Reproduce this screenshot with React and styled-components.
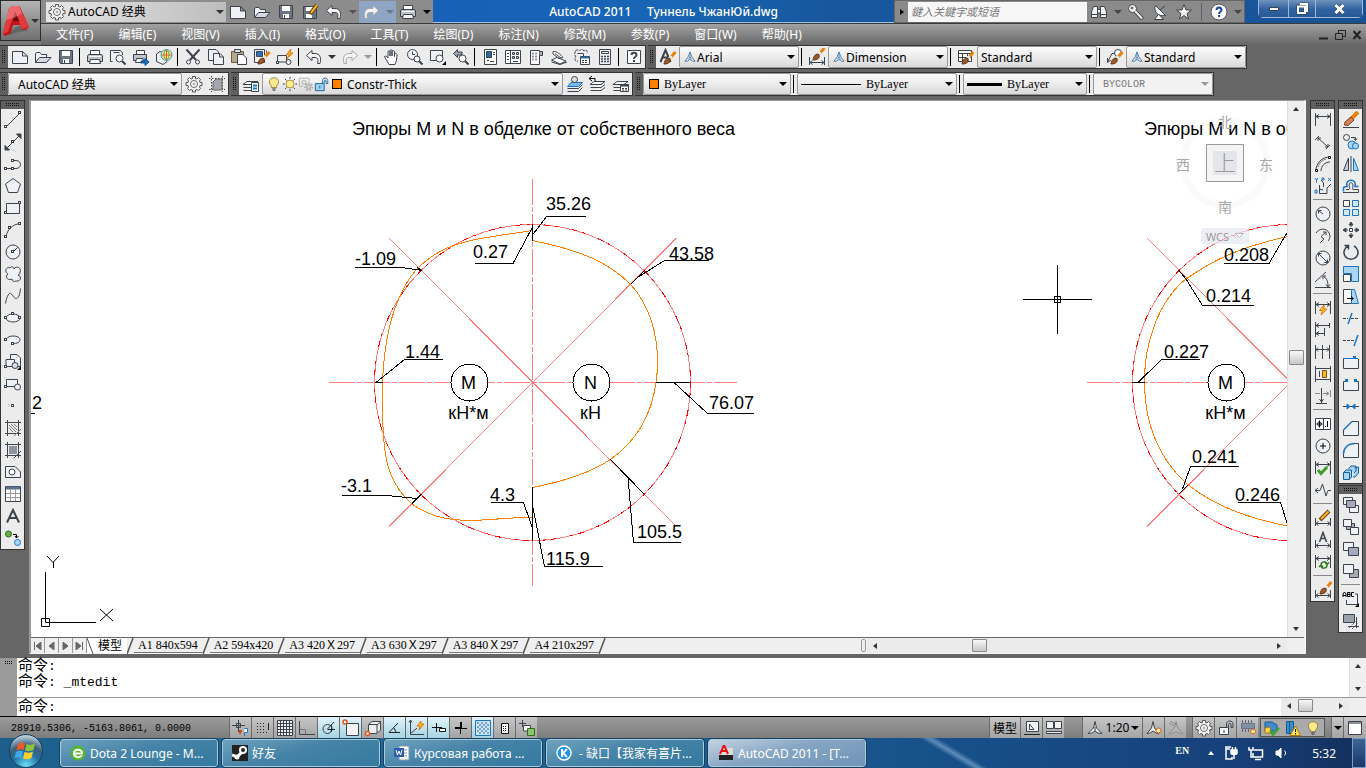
import React from "react";
import styled, { createGlobalStyle, css } from "styled-components";

const INK = "#3b434d";
const PALE = "#eef1f6";
const BLUE = "#1b74c4";
const SKY = "#a9d6f2";

const Node = ({ x, y }) => <rect x={x - 1.5} y={y - 1.5} width="2" height="2" fill="#fff" />;

const Brush = () => (
  <>
    <path d="M16.500 4L11.500 9.500" stroke="#e8820c" strokeWidth="3" />
    <path d="M12.500 8L10 11" stroke="#e8e8e8" strokeWidth="3" />
    <path d="M11 10.500C8 9.500 6 11 5 16C9 16 12 14.500 11 10.500Z" fill="#9c5a28" stroke="#5f3414" />
  </>
);

const DimBar = ({ y = 0 }) => (
  <path d={`M1.500 ${y + 2}V${y + 15} M16.500 ${y + 2}V${y + 15} M2 ${y + 5.5}H16 M5 ${y + 3.5}L2 ${y + 5.5}L5 ${y + 7.5} M13 ${y + 3.5}L16 ${y + 5.5}L13 ${y + 7.5}`} />
);

const LowBar = () => <path d="M1.500 9V17 M16.500 9V17 M2 14.500H16 M4.500 12.500L2 14.500L4.500 16.500 M13.500 12.500L16 14.500L13.500 16.500" />;

const Gear = () => (
  <>
    <path d="M7.500 1.500H10.500V3.500L12 4L13.500 2.500L15.500 4.500L14.500 6L15 7.500H17V10.500H15L14.500 12L15.500 13.500L13.500 15.500L12 14.500L10.500 15V17H7.500V15L6 14.500L4.500 15.500L2.500 13.500L3.500 12L3 10.500H1V7.500H3L3.500 6L2.500 4.500L4.500 2.500L6 4L7.500 3.500Z" fill="#f2f2f2" stroke="#555" />
    <circle cx="9" cy="9" r="3.500" fill="#fff" stroke="#666" />
    <circle cx="9" cy="9" r="1" stroke="#999" />
  </>
);

const Sheets = () => (
  <path d="M5 6.500H16L12 9.500H1Z M1.500 12.500H12L16 9.500 M1.500 15.500H12L16 12.500 M1.500 9.500V10" fill="#fff" />
);

const icons = {
  new: <path d="M1.500 3.500H11.500L16.500 8V15.500H1.500Z M11.500 3.500V8H16.500" fill={PALE} />,
  open: (
    <>
      <path d="M1.500 14.500V5.500L3 4.500H6L7.500 6.500H12.500V9" fill={PALE} />
      <path d="M1.500 14.500L5.500 9.500H17L12.500 14.500Z" fill="#d5dae2" />
    </>
  ),
  save: (
    <>
      <path d="M2.500 2.500H15.500V15.500H3.500L2.500 14.500Z" fill="#6a7482" />
      <path d="M5 3H13V8H5Z M6 11H12V15H6Z" fill="#fff" stroke="none" />
      <path d="M7.500 12V15" />
    </>
  ),
  saveas: (
    <>
      <path d="M2.500 3.500H15.500V15.500H2.500Z" fill="#6a7482" />
      <path d="M5 4H13V8H5Z M5 11H11V15H5Z" fill="#fff" stroke="none" />
      <path d="M16 2L9 11" stroke="#6b4a12" strokeWidth="4" />
      <path d="M16 2L10 10" stroke="#ffb52a" strokeWidth="2" />
    </>
  ),
  print: (
    <>
      <path d="M4.500 7V2.500H13.500V7" fill="#fff" />
      <path d="M2.500 6.500H15.500L16.500 8V13.500H1.500V8Z" fill="#bcc3cc" />
      <path d="M3 8.500H15" stroke="#fff" />
      <path d="M4.500 11.500H13.500L14.500 15.500H3.500Z" fill="#fff" />
    </>
  ),
  preview: (
    <>
      <path d="M3.500 13.500H1.500V2.500H11.500L13.500 5V7 M4.500 4.500H10.500" fill={PALE} />
      <circle cx="10.500" cy="10.500" r="3.500" fill="#fff" />
      <path d="M13 13L16.500 16.500" strokeWidth="2" />
    </>
  ),
  publish: (
    <>
      <path d="M4.500 7V2.500H12.500V7" fill="#fff" />
      <path d="M1.500 6.500H14.500V12.500H1.500Z" fill="#bcc3cc" />
      <path d="M4.500 10.500H11V14.500H3.500Z" fill="#fff" />
      <path d="M9 13H13V10.500L17 14L13 17.500V15H9Z" fill={BLUE} stroke="#0b4f90" />
    </>
  ),
  globe: (
    <>
      <path d="M1.500 6L5 3.500L12 6V13.500L8 16.500L1.500 13.500Z" fill={PALE} />
      <circle cx="11.500" cy="7" r="5.500" fill="#ffe27a" stroke="#3a9bd0" />
      <path d="M11.500 1.500V12.500 M6 7H17" stroke="#e2632a" />
      <path d="M11.500 2C8 4 8 10 11.500 12 M11.500 2C15 4 15 10 11.500 12" stroke="#39a86a" />
    </>
  ),
  cut: (
    <>
      <path d="M2.500 1.500L12 12 M15.500 1.500L6 12" strokeWidth="2" />
      <circle cx="4.500" cy="14" r="2" fill="#fff" />
      <circle cx="13.500" cy="14" r="2" fill="#fff" />
    </>
  ),
  copyclip: (
    <>
      <path d="M1.500 1.500H9L11.500 4V12.500H1.500Z" fill={PALE} />
      <path d="M6.500 5.500H13L16.500 9V16.500H6.500Z M12.500 5.500V9H16.500" fill={PALE} />
    </>
  ),
  paste: (
    <>
      <path d="M1.500 3.500H13.500V14.500H1.500Z" fill="#b9a78d" stroke="#6b5b45" />
      <path d="M4.500 1.500H10.500V4.500H4.500Z" fill="#ddd" />
      <path d="M7.500 6.500H13L16.500 10V16.500H7.500Z" fill="#fff" />
    </>
  ),
  match: (
    <>
      <path d="M1.500 1.500H11.500V14.500H1.500Z" fill={PALE} />
      <path d="M3.500 3.500H9.500V8.500H3.500Z" fill="#2f72b3" />
      <path d="M13.500 2V8" stroke="#777" />
      <Brush />
    </>
  ),
  blockedit: (
    <>
      <path d="M1.500 7.500H10.500V14H3 M1.500 7.500V13" />
      <Node x={2} y={15} />
      <circle cx="12.500" cy="14" r="2.500" fill={PALE} />
      <path d="M15 1L10.500 6.500H13.500L11 10.500L17 5H14Z" fill="#ffb52a" stroke="#e0780c" />
    </>
  ),
  undo: <path d="M1.500 7.500L7 2.500V5.500H10C15 5.500 16.500 10 15 15.500H12.500C13.500 11.500 13 9.500 10 9.500H7V12.500Z" fill="#fafafa" />,
  redo: <path d="M16.500 7.500L11 2.500V5.500H8C3 5.500 1.500 10 3 15.500H5.500C4.500 11.500 5 9.500 8 9.500H11V12.500Z" fill="#f4f4f4" stroke="#a3a8ae" />,
  pan: <path d="M6 16.500C4 13 2.500 10.500 1.500 8.500C2.500 7.500 4 8.500 5 10V3.500C6 2.500 7 3 7 4V8V2.500C8 1.500 9 2 9 3V8V3C10 2 11.500 2.500 11.500 4V8.500V5.500C13 5 14 5.500 14 7C14 11 13 14 12 16.500Z" fill="#fff" />,
  zoomrt: (
    <>
      <circle cx="6.500" cy="6.500" r="5" fill={PALE} />
      <path d="M6.500 3.500V6.500H9" />
      <circle cx="11" cy="11" r="3" fill="#fff" />
      <path d="M13 13L16.500 16.500" strokeWidth="2" />
    </>
  ),
  zoomwin: (
    <>
      <path d="M1.500 2.500H13.500V12.500H1.500Z" fill={PALE} />
      <circle cx="10.500" cy="10.500" r="3.500" fill="#fff" />
      <path d="M17 13V17H13Z" fill="#000" stroke="none" />
    </>
  ),
  zoomprev: (
    <>
      <path d="M1.500 5.500L5.500 1.500V4H10V7H5.500V9.500Z" fill="#9aa3ae" />
      <circle cx="10.500" cy="10.500" r="3.500" fill="#fff" />
      <path d="M13 13L16.500 16.500" strokeWidth="2" />
    </>
  ),
  props: (
    <>
      <path d="M3.500 1.500H15.500V16.500H3.500Z" fill="#fff" />
      <path d="M5.500 3.500H10.500V9.500H5.500Z" fill="#2b6ca8" />
      <path d="M12 4.500H14 M12 6.500H14 M6 12.500H8 M9 13.500H13" />
    </>
  ),
  center: (
    <>
      <path d="M1.500 2.500H16.500V15.500H1.500Z M6.500 2.500V15.500" fill="#fff" />
      <path d="M3 5.500H5 M3 8.500H5 M3 11.500H5" />
      <path d="M8.500 4.500H10.500V6.500H8.500Z M12.500 4.500H14.500V6.500H12.500Z M8.500 8.500H10.500V10.500H8.500Z M12.500 8.500H14.500V10.500H12.500Z M9 13.500H14" fill="#ccd" />
    </>
  ),
  palettes: (
    <>
      <path d="M3.500 2.500H12.500V16.500H3.500Z" fill="#fff" />
      <path d="M12.500 3.500H15.500V7.500H12.500" fill="#aab" />
      <path d="M5 5.500H11 M5 8.500H11 M5 11.500H11" strokeDasharray="2 1" strokeWidth="2" stroke="#99a" />
    </>
  ),
  sheetset: (
    <>
      <path d="M1.500 12L7 9.500L16 13L10 16Z M3 3.500C7 3 11 7 13 9.500L9 10.500L3 6Z" fill="#fff" />
      <path d="M1.500 14L10 16.500L17 14 M5 5.500L11 10" />
    </>
  ),
  markup: (
    <>
      <path d="M2.500 3C4 1 6 2 6.500 3C8 1 10 1 11 3C13 1 15 3 14 5 M2.500 3C1 6 2 8 3 9C1 11 2 14 5 13" strokeDasharray="3 1" />
      <path d="M4.500 5.500H10.500V9" fill="#fff" />
      <path d="M7.500 8.500H16.500V16.500H7.500Z" fill="#fff" />
      <path d="M8 9.500H16" strokeWidth="2" stroke="#2b6ca8" />
      <path d="M9 12.500H15 M9 14.500H15" strokeDasharray="2 1" />
    </>
  ),
  calc: (
    <>
      <path d="M3.500 1.500H14.500V16.500H3.500Z" fill={PALE} />
      <path d="M5.500 3.500H12.500V5.500H5.500Z" fill="#fff" />
      <path d="M5 8.500H13 M5 11H13 M5 13.500H13" strokeDasharray="2 1" strokeWidth="1.500" />
    </>
  ),
  help: (
    <>
      <path d="M2.500 2.500H15.500V15.500H2.500Z" fill="#fff" />
      <path d="M6.500 7C6.500 4 11.500 4 11.500 7C11.500 9 9 8.500 9 11" strokeWidth="2" />
      <path d="M9 12V14" strokeWidth="2" />
    </>
  ),
  helpball: (
    <>
      <circle cx="9" cy="9" r="8" fill="#fff" stroke="#556" />
      <path d="M6.500 7C6.500 3.500 11.500 3.500 11.500 7C11.500 9 9 8.500 9 11" strokeWidth="2" stroke="#1247a8" />
      <path d="M9 12V14" strokeWidth="2" stroke="#1247a8" />
    </>
  ),
  textstyle: (
    <>
      <path d="M1.500 14L6.500 2L11.500 14 M3.500 9.500H9.500" strokeWidth="2" />
      <Brush />
    </>
  ),
  dimstyle: (
    <>
      <LowBar />
      <g transform="translate(0 -4)"><Brush /></g>
    </>
  ),
  tablestyle: (
    <>
      <path d="M1.500 2.500H14.500V13.500H1.500Z M1.500 5.500H14.500 M1.500 9.500H14.500 M5.500 5V13 M10.500 5V13" fill="#fff" />
      <Brush />
    </>
  ),
  leaderstyle: (
    <>
      <path d="M1.500 14L6 5.500H9 M1.500 10V14.500L5 12" />
      <circle cx="12" cy="5" r="3.500" fill="#fff" />
      <Brush />
    </>
  ),
  gear: <Gear />,
  wsset: (
    <>
      <path d="M1 3.500H17 M1 14.500H17 M3.500 1V17 M14.500 1V17" strokeDasharray="1.500 1.500" />
      <path d="M5 15V7L8 4H14V15Z" fill="#a3a7ad" stroke="#666" />
    </>
  ),
  layers: (
    <>
      <Sheets />
      <path d="M9.500 7.500H16.500V16.500H9.500Z" fill="#fff" />
      <path d="M11 10.500H15 M11 13.500H15" stroke={BLUE} strokeWidth="2" />
    </>
  ),
  laycur: (
    <>
      <path d="M5 7.500H16.500L12.500 11.500H1.500Z" fill="#7db8e8" stroke={BLUE} />
      <path d="M1.500 13.500H12.500L16.500 9.500 M1.500 16.500H12.500L16.500 12.500" />
      <circle cx="8.500" cy="4.500" r="3" fill="#ddd" />
    </>
  ),
  layprev: (
    <>
      <Sheets />
      <path d="M0 3.500H6V7 M3 1L0 3.500L3 6" stroke="#000" fill="#ebebeb" />
    </>
  ),
  laystate: (
    <>
      <Sheets />
      <path d="M8.500 9.500H16.500V16.500H8.500Z" fill="#fff" />
      <path d="M9 10.500H16" stroke={INK} strokeWidth="2" />
      <path d="M10 13.500H15 M10 15H15" strokeDasharray="2 1" />
    </>
  ),
  bulb: (
    <>
      <path d="M6 11C2 7 4 2 9 2C14 2 16 7 12 11V13H6Z" fill="#ffe98a" stroke="#8d7a3a" />
      <path d="M7 14.500H11 M7.500 16H10.500" />
    </>
  ),
  sun: (
    <>
      <circle cx="9" cy="9" r="4.500" fill="#ffe98a" stroke="#a88c3a" />
      <path d="M9 1V3 M9 15V17 M1 9H3 M15 9H17 M3.500 3.500L5 5 M13 13L14.500 14.500 M14.500 3.500L13 5 M5 13L3.500 14.500" stroke="#222" />
    </>
  ),
  vpfreeze: (
    <>
      <path d="M1.500 2.500H12.500V6 M1.500 2.500V11.500H6 M4.500 5.500H9V9H4.500Z" stroke="#aaa" />
      <circle cx="12" cy="12" r="4" strokeDasharray="2 1.500" stroke="#aaa" strokeWidth="2" />
      <circle cx="12" cy="12" r="2.500" fill="#ccc" stroke="#aaa" />
    </>
  ),
  unlock: (
    <>
      <path d="M1.500 8.500H11.500V16.500H1.500Z" fill="#9fd0f0" stroke="#14608f" />
      <path d="M9.500 8V5C9.500 1.500 15.500 1.500 15.500 5V8.500H13.500V5.500C13.500 4.500 11.500 4.500 11.500 5.500V8" stroke="#14608f" fill="#dcefff" />
      <path d="M6.500 11V14" stroke="#14608f" />
    </>
  ),
  annot: <path d="M9 2.500L6.500 9L2.500 14.500H5.500L9 12L12.500 14.500H15.500L11.500 9Z M9 3V9L7 12 M9 9L11 12" stroke="#2f6ca5" />,
  // draw toolbar
  line: <><path d="M2 16L16 2" /><Node x={2} y={16} /><Node x={16} y={2} /></>,
  xline: <><path d="M2 16L16 2" /><path d="M1 17V12.500L5.500 17Z M17 1V5.500L12.500 1Z" fill={INK} /><Node x={9} y={9} /></>,
  pline: <><path d="M2 13.500H12C18 13.500 18 5.500 12 5.500H10" /><Node x={2} y={14} /><Node x={9} y={14} /><Node x={9} y={6} /></>,
  polygon: <path d="M9 1.500L16.500 7L13.500 15.500H4.500L1.500 7Z" fill={PALE} />,
  rect: <><path d="M2.500 4.500H15.500V14.500H2.500Z" fill={PALE} /><Node x={2} y={14} /><Node x={16} y={4} /></>,
  arc: <><path d="M2 16C3 9 8 3.500 16 2.500" /><Node x={2} y={16} /><Node x={6} y={7} /><Node x={16} y={3} /></>,
  circle: <><circle cx="9" cy="9" r="7" fill={PALE} /><path d="M9 9L13.500 4.500" /><Node x={9} y={9} /></>,
  cloud: <path d="M4 9C0 7 2 1 6 3C8 1 10 2 10 4C12 0 18 3 16 7C16 9 15 10 14 10C18 11 17 17 12 16C10 17 8 16 8 14C4 16 0 12 4 9Z" fill={PALE} />,
  spline: <path d="M1.500 16.500C2.500 10 5 5 7 6.500C9 8 10 12 12.500 11.500C15 11 16 6 16.500 1.500" />,
  ellipse: <><ellipse cx="9" cy="9" rx="7" ry="4" fill={PALE} /><Node x={2} y={9} /><Node x={16} y={9} /><Node x={9} y={5} /></>,
  elarc: <><path d="M2 9C3 3.500 16 4 16 8.500C16 11.500 13 12.500 9 12.500" fill={PALE} /><Node x={2} y={9} /><Node x={9} y={13} /></>,
  insert: (
    <>
      <path d="M6.500 7V1.500H13L16.500 5V13.500H12" fill={PALE} />
      <path d="M2 13.500V6.500H10.500V13.500Z" fill={PALE} />
      <circle cx="11" cy="12.500" r="3" fill="#dde" />
      <Node x={2} y={14} />
      <path d="M17 13V17H13Z" fill="#000" stroke="none" />
    </>
  ),
  block: <><path d="M2.500 4.500H13.500V11.500H2.500Z" fill={PALE} /><circle cx="13.500" cy="12" r="3" fill={PALE} /><Node x={2} y={12} /></>,
  point: <Node x={9} y={9} />,
  hatch: <><path d="M3.500 1V17 M14.500 1V17 M1 3.500H17 M1 14.500H17" /><path d="M5 6L12 13 M5 9L9 13 M7 5L13 11 M10 5L13 8 M10 17L17 10" stroke="#777" /></>,
  gradient: <><path d="M5 5H13V13H5Z" fill="#8d949c" stroke="none" /><path d="M3.500 1V17 M14.500 1V17 M1 3.500H17 M1 14.500H17 M10 17L17 10" /></>,
  region: <><path d="M1.500 3.500H11L16.500 9V14.500H1.500Z" fill={PALE} /><circle cx="8" cy="9" r="3" fill="#fff" /></>,
  table: <><path d="M1.500 1.500H16.500V16.500H1.500Z" fill="#fff" /><path d="M2 3H16" strokeWidth="3" stroke="#5d7290" /><path d="M2 8.500H16 M2 12.500H16 M6.500 4V16 M11.500 4V16" stroke="#99a" /></>,
  mtext: <path d="M3 15.500L9 3L15 15.500 M5 11H13" strokeWidth="2" />,
  addsel: (
    <>
      <circle cx="4.500" cy="5" r="3" fill="#6cae4a" stroke="#2f6b1d" />
      <path d="M9 5.500H12.500V9 M11 7L12.500 9L14.500 7" stroke="#000" />
      <circle cx="13.500" cy="13.500" r="3" fill={SKY} stroke={BLUE} />
    </>
  ),
  // dimension toolbar
  dlinear: <DimBar />,
  daligned: <path d="M5 3L1 7 M16 12L12 16 M4 5L14 14 M4 8V5H7 M14 11V14H11" />,
  darc: <><path d="M2 16C2 8 8 2 16 2 M7 16C7 11 11 7 16 7" /><path d="M4 12C5 8 8 5 12 4" stroke="#888" /><path d="M1.500 14.500H3.500V16.500H1.500Z M14.500 1.500H16.500V3.500H14.500Z" fill="#fff" stroke="#000" /></>,
  dord: <><path d="M5.500 8V16.500H13V11L17 7 M9.500 10V6L7 3 M5.500 12L9 13" /><path d="M1 1L2.500 3L4 1 M2.500 3V5.500 M8 1H10V3H8Z M14 1L17 4 M17 1L14 4 M1 13H3V16H1Z" stroke={BLUE} /></>,
  dradius: <><circle cx="9" cy="9" r="7" fill={PALE} /><path d="M9 9L4.500 5.500 M4.500 8.500V5.500H7.500" /></>,
  djog: <path d="M2 6C6 0 15 1 16 9C16 11 15 13 14 14 M6 16L10 12L7 9.500L12 5 M12 8V5H9" />,
  ddiam: <><circle cx="9" cy="9" r="7" fill={PALE} /><path d="M4.500 4.500L13.500 13.500 M4.500 7.500V4.500H7.500 M13.500 10.500V13.500H10.500" /></>,
  dang: <path d="M1 16.500H17 M1 11L12 1 M10 6C13 7 14 11 14 16 M12 13.500L14 16L16 13.500 M9 8V5H12" />,
  dquick: <><DimBar /><path d="M10 6L5.500 11.500H8.500L7 16L13 10H10Z" fill="#ffb52a" stroke="#e0780c" /></>,
  dbase: <path d="M1.500 1V16 M2 4.500H15 M15.500 2V7 M2 12.500H10 M10.500 7V15 M5 2.500L2 4.500L5 6.500 M5 10.500L2 12.500L5 14.500" />,
  dcont: <path d="M1.500 2V16 M8.500 2V16 M15.500 2V16 M2 6.500H15 M4 4.500L2 6.500L4 8.500 M13 4.500L15 6.500L13 8.500" />,
  dspace: <><path d="M1.500 1V17 M16.500 1V17 M2 3.500H16 M2 14.500H16 M5.500 6V12" /><path d="M8.500 5.500H12.500V12.500H8.500Z" fill="#ffb52a" stroke="#7a5a10" /></>,
  dbreak: <><path d="M1 6.500H6 M9 6.500H15 M16.500 3V10 M12 4.500L15 6.500L12 8.500" stroke="#888" /><path d="M7.500 1V16 M2 16.500H13 M5.500 12L7.500 15L9.500 12" /></>,
  dtol: <><path d="M1.500 3.500H16.500V14.500H1.500Z M9.500 3V15" fill="#fff" /><circle cx="5.500" cy="9" r="2" /><path d="M5.500 5.500V12.500 M2.500 9H8.500 M13.500 6V12 M11 11.500H12" stroke="#000" /></>,
  dcenter: <><circle cx="9" cy="9" r="7" fill={PALE} /><path d="M9 6V12 M6 9H12" stroke="#000" /></>,
  dinspect: <><DimBar /><path d="M4 11L7 14.500L13 8" stroke="#3d9b2b" strokeWidth="3" /></>,
  djogline: <path d="M1 9.500H6L8.500 3L12 15L14 9.500H17 M4 7L1 9.500L4 12" />,
  dedit: <><LowBar /><path d="M15 2L6 11" stroke="#6b4a12" strokeWidth="4" /><path d="M14.500 2.500L7 10" stroke="#ffb52a" strokeWidth="2" /></>,
  dtedit: <><LowBar /><path d="M5.500 11L9 1.500L12.500 11 M7 7.500H11" strokeWidth="1.500" /></>,
  dupdate: <><DimBar /><path d="M7 12C7 8 13 8 13 11 M13 12C13 16 7 16 7 13 M11 9.500L13 11.500L15 9.500 M5 14L7 12L9 14" stroke="#2f7a20" strokeWidth="1.500" /></>,
  dstyle: <><LowBar /><g transform="translate(1 -3)"><Brush /></g></>,
  // modify toolbar
  erase: <><path d="M16 1L8 9" stroke="#e8820c" strokeWidth="4" /><path d="M9 6L12 9L6 14.500L2.500 14L3 11Z" fill="#d9835a" stroke="#7d3b1e" /><path d="M1 16.500H17" /></>,
  copy: <><circle cx="4.500" cy="4.500" r="3" fill={PALE} /><path d="M9 4.500H13.500V7 M12 5.500L13.500 7.500L15 5.500" /><circle cx="10" cy="12" r="4" fill={SKY} stroke={BLUE} /><circle cx="13.500" cy="13" r="3" fill={SKY} stroke={BLUE} /></>,
  mirror: <><path d="M6.500 3V15.500H1.500Z" fill="#ccd" /><path d="M11.500 3V15.500H16.500Z" fill={SKY} stroke={BLUE} /><path d="M9 1V17" /></>,
  offset: <><path d="M1.500 14.500V11C1.500 10 3 9.500 5 9.500C2.500 1 15.500 1 13 9.500H16.500" stroke={BLUE} strokeWidth="1.500" /><path d="M1 15.500H16.500V12.500H11C9.500 12 12 9 10.500 6.500C9.500 5.500 8 5.500 7.500 6.500C6 9 9 12 7 12.500H4" /></>,
  array: <><path d="M1.500 1.500H7.500V7.500H1.500Z" fill="#fff" /><path d="M10.500 1.500H16.500V7.500H10.500Z M1.500 10.500H7.500V16.500H1.500Z M10.500 10.500H16.500V16.500H10.500Z" fill="#d4e9f8" stroke={BLUE} /></>,
  move: <><path d="M9 2V16 M2 9H16" strokeDasharray="4 1" /><path d="M9 1L11 4H7Z M9 17L11 14H7Z M1 9L4 7V11Z M17 9L14 7V11Z" fill={INK} /><path d="M7.500 7.500H10.500V10.500H7.500Z" fill="#fff" /></>,
  rotate: <path d="M12 3A7 7 0 1 1 6 3 M2.500 2.500H6.500V6.500" strokeWidth="1.500" />,
  scale: <><path d="M1.500 1.500H16.500V16.500H9.500V8.500H1.500Z" fill={SKY} stroke={BLUE} /><path d="M1.500 9.500H8.500V16.500H1.500Z" fill="#fff" /></>,
  stretch: <><path d="M1.500 2.500H9.500V16.500H1.500Z" fill="#fff" /><path d="M9.500 2.500H12.500L16.500 16.500H9.500Z" fill={SKY} stroke={BLUE} /><path d="M5 11.500H11 M9 9.500L11.500 11.500L9 13.500" stroke="#000" /></>,
  trim: <><path d="M1 9.500H6 M9 9.500H17" strokeDasharray="3 1" /><path d="M6 15L10 4" stroke={BLUE} strokeWidth="1.500" /></>,
  extend: <><path d="M1 9.500H12" strokeDasharray="3 1" /><path d="M12 15L16 4" stroke={BLUE} strokeWidth="1.500" /></>,
  breakpt: <><path d="M1.500 6V15.500H16.500V6" fill={PALE} /><path d="M1 5.500H16" stroke={BLUE} /><path d="M11 3H14V6H11Z" fill={BLUE} stroke="none" /></>,
  break: <><path d="M4 6.500H1.500V15.500H16.500V6.500H14" fill={PALE} /><path d="M3 4H6V7H3Z M12 4H15V7H12Z" fill={BLUE} stroke="none" /></>,
  join: <><path d="M1 9.500H17" /><path d="M5 7L8 9.500L5 12Z M13 7L10 9.500L13 12Z" fill={BLUE} stroke={BLUE} /></>,
  chamfer: <><path d="M1.500 11V16.500H16.500V2.500H10" fill={PALE} /><path d="M1.500 11L10 2.500" stroke={BLUE} strokeWidth="1.500" /></>,
  fillet: <><path d="M1.500 13V16.500H16.500V2.500H13" fill={PALE} /><path d="M1.500 13C1.500 7 6 2.500 13 2.500" stroke={BLUE} strokeWidth="1.500" /></>,
  explode: <path d="M1.500 9.500L4 7H9.500V14L7.500 16.500H1.500Z M6.500 6L9 3H14V8L12 10 M12.500 5L16.500 4V10L13 14H11 M1.500 9.500H7.500V16" fill={SKY} stroke="#155f9f" />,
  front: <><path d="M1.500 1.500H10.500V8.500H1.500Z M7.500 9.500H16.500V16.500H7.500Z" fill={PALE} /><path d="M4.500 4.500H13.500V11.500H4.500Z" fill="#a6a9bd" /></>,
  back: <><path d="M4.500 5.500H12.500V11.500H4.500Z" fill="#a9aab4" /><path d="M1.500 1.500H9.500V8.500H1.500Z M8.500 9.500H16.500V16.500H8.500Z" fill={PALE} /></>,
  above: <><path d="M1.500 2.500H11.500V10.500H1.500Z" fill={PALE} /><path d="M6.500 7.500H16.500V15.500H6.500Z" fill="#a6a9bd" /></>,
  under: <><path d="M7.500 7.500H16.500V15.500H7.500Z" fill="#a9aab4" /><path d="M1.500 2.500H11.500V11.500H1.500Z" fill={PALE} /></>,
  textfront: <><path d="M4.500 10V14.500H15.500V4H13" fill={PALE} /><path d="M1 7V4L2.500 2L4 4V7 M1 5.500H4 M5.500 2.500V6.500H8V2.500Z M5.500 4.500H8 M12 2.500H9.500V6.500H12" stroke="#000" /><path d="M17 13V17H13Z" fill="#000" stroke="none" /></>,
  hatchback: <><path d="M1.500 2.500H12.500V10.500H1.500Z" fill="#9aa2ae" /><path d="M14.500 5V16 M6 14.500H17" /><path d="M7 16L14 9 M10 17L16 11" strokeDasharray="1 1" /></>,
  // status bar
  infer: <><path d="M6.500 1V13 M0 6.500H13 M4.500 4.500H8.500V8.500H4.500Z" /><path d="M8 15V12H10" stroke="#d0481c" strokeWidth="2" /><path d="M12.500 9.500H15.500V13.500H12.500V17" stroke={BLUE} fill="#fff" /></>,
  snap: <><path d="M3 4.500H12 M3 7.500H12 M3 10.500H12 M3 13.500H15" stroke="#222" strokeDasharray="1 2" /><path d="M14.500 4V11" stroke="#222" /></>,
  grid: <path d="M1.500 1.500H16.500V16.500H1.500Z M1.500 4.500H16.500 M1.500 7.500H16.500 M1.500 10.500H16.500 M1.500 13.500H16.500 M4.500 1.500V16.500 M7.500 1.500V16.500 M10.500 1.500V16.500 M13.500 1.500V16.500" fill="#eee" />,
  ortho: <><path d="M1.500 2V15.500H17" /><path d="M2 10.500H7.500V15" stroke="#777" /></>,
  polar: <><circle cx="7.500" cy="10" r="4.500" /><path d="M7.500 10.500H15 M7.500 10L14 3 M11 6C12 8 12 9 11 13" stroke="#222" /></>,
  osnap: <><path d="M4.500 4.500H16.500V16.500H4.500Z" fill="#f2f2f2" /><circle cx="3" cy="3" r="2" fill="#fff" stroke="#e2551a" strokeWidth="1.500" /></>,
  osnap3: <><path d="M4.500 5.500L8 2.500H16.500V11L13 14.500H4.500Z M13 14V6L16.500 3 M5 5.500H13" fill="#eee" /><circle cx="3.500" cy="14.500" r="2" fill="#fff" stroke="#e2551a" strokeWidth="1.500" /></>,
  otrack: <path d="M3 13.500H14 M3 13.500L12 4 M8 9L10 13" stroke="#222" />,
  ducs: <><path d="M2.500 1V15.500H16 M2 15L9 9 M1 3.500L2.500 1L4 3.500" /><path d="M13 2L9 7H12L11 11L16 5H13Z" fill="#ffb52a" stroke="#e0780c" /></>,
  dyn: <><path d="M2 8.500H12 M6.500 4V13" stroke="#111" /><path d="M9.500 9.500H15.500V12.500H9.500Z" fill="#fff" stroke="#111" /></>,
  lwt: <><path d="M3 9H9V3" stroke="#000" strokeWidth="2" /><path d="M9 9.500H15 M8.500 9V15" stroke="#000" /></>,
  tpy: <><path d="M1.500 1.500H16.500V16.500H1.500Z" fill="#cfe3f5" stroke={BLUE} /><path d="M3 4H15 M3 8H15 M3 12H15" stroke="#78a9d4" strokeWidth="2" strokeDasharray="2 2" /><path d="M5 6H15 M5 10H15 M5 14H15" stroke="#78a9d4" strokeWidth="2" strokeDasharray="2 2" /></>,
  qp: <><path d="M5.500 4.500H12.500V14.500H5.500Z" fill="#fff" stroke="#111" /><path d="M7 7.500H11 M7 9.500H11 M7 11.500H11" stroke="#222" strokeDasharray="1 1" /></>,
  sc: <><path d="M4.500 1V8 M1 4.500H8" /><path d="M5.500 6.500H12.500V12H5.500Z" fill="#fff" /><path d="M9.500 9.500H16.500V16.500H9.500Z" fill="#8cc56c" stroke="#2f6b1d" /></>,
  layout: <><path d="M3.500 2.500H15.500V12.500H3.500Z" fill="#f2f2f2" /><path d="M6.500 5V10.500H11Z" /><path d="M1 15.500H17" stroke="#222" /></>,
  quick: <><path d="M1.500 2.500H8.500V9.500H1.500Z M9.500 2.500H16.500V9.500H9.500Z" fill="#f2f2f2" /><path d="M1.500 12.500H16.500V14.500H1.500Z" fill="#eee" /></>,
  ascale: <path d="M9 2.500L7.500 9L2 14.500L6 14L9 12L12 14L16 14.500L10.500 9Z M9 8V12" fill="#eee" />,
  avis: <><path d="M8 2.500L6.500 9L2 14.500L5 14L8 12L11 14L14 14.500L9.500 9Z" fill="#eee" /><circle cx="13.500" cy="11.500" r="2.500" fill="#fff0a0" stroke="#e2551a" /></>,
  aauto: <path d="M9 2.500L7.500 9L2 14.500L6 14L9 12L12 14L16 14.500L10.500 9Z M2 4L7 7 M3 2L8 5" fill="#bbb" stroke="#888" />,
  lock: <><path d="M2.500 8.500H11.500V15.500H2.500Z" fill="#f4f4f4" /><path d="M9.500 8V5C9.500 1 16 1 16 5V8.500 M11.500 8V5.500C11.500 4 14 4 14 5.500V8.500H16 M7 11V14" /></>,
  hw: <><path d="M2.500 4.500H15.500V9.500H2.500Z" fill="#8190a4" stroke="#65748a" /><path d="M3 2.500H15 M3 11.500H11" strokeDasharray="1 2" strokeWidth="2" /><circle cx="14" cy="12.500" r="2.500" fill="#fff0a0" stroke="#e2551a" /></>,
  trayfile: <><path d="M2 3H9L14 6V12H2Z" fill="#3e8ccc" stroke="#165a94" /><path d="M2 9L7 8L8 14H2Z" fill="#ffd34d" stroke="#a87a10" /><path d="M7 12L10 15.500L16 9" stroke="#3ea52b" strokeWidth="2.500" /></>,
  traywarn: <><path d="M2.500 2.500H9.500V14.500H2.500Z M5.500 2.500V14" fill="#3e8ccc" stroke="#165a94" /><path d="M11.500 7L16.500 16.500H6Z" fill="#ffe14d" stroke="#a87a10" /><path d="M11.500 10V13 M11.500 14V15.500" stroke="#000" /></>,
  screen: <><path d="M2.500 2.500H15.500V15.500H2.500Z" fill="#fff" /><path d="M3 4H15" strokeWidth="2" stroke="#8a8f96" /></>,
  // search strip
  binoc: <><path d="M3.500 3.500H7.500V14.500H1.500V9Z M10.500 3.500H14.500L16.500 9V14.500H10.500Z M7.500 6.500H10.500V10H7.500Z" fill="#f2f2f2" /><path d="M2 11.500H7 M11 11.500H16" /></>,
  key: <><circle cx="5.500" cy="5.500" r="4" fill="#f4f4f4" /><path d="M8 8L15.500 16" stroke={INK} strokeWidth="4" /><path d="M8 8L15 15.500" stroke="#f4f4f4" strokeWidth="2" /><circle cx="5" cy="5" r="1" /></>,
  dish: <path d="M4.500 2.500C2 8 7 14 14.500 12.500Z M9 7L14 3 M7 12L3.500 16.500H12.500L9 12.500" fill="#f4f4f4" />,
  star: <path d="M9 1.500L11 7H16.500L12 10.500L13.500 16L9 12.500L4.500 16L6 10.500L1.500 7H7Z" fill="#f4f4f4" />,
};

const Icon = ({ name, size = 18 }) => (
  <svg width={size} height={size} viewBox="0 0 18 18" fill="none" stroke={INK} aria-hidden="true">
    {icons[name]}
  </svg>
);

const Caret = ({ color = "#000" }) => (
  <svg width="8" height="4" viewBox="0 0 8 4" aria-hidden="true">
    <path d="M0 0H8L4 4Z" fill={color} />
  </svg>
);

const arrows = { left: "M5 0V6L1 3Z", right: "M1 0V6L5 3Z", up: "M0 5H6L3 1Z", down: "M0 1H6L3 5Z" };
const Arrow = ({ dir, color = "#333" }) => (
  <svg width="6" height="6" viewBox="0 0 6 6" aria-hidden="true">
    <path d={arrows[dir]} fill={color} />
  </svg>
);

const standard = ["new", "open", "save", "|", "print", "preview", "publish", "globe", "|", "cut", "copyclip", "paste", "match", "blockedit", "|", "undo", "v", "redo", "w", "|", "pan", "zoomrt", "zoomwin", "zoomprev", "|", "props", "center", "palettes", "sheetset", "markup", "calc", "|", "help"];
const draw = ["line", "xline", "pline", "polygon", "rect", "arc", "circle", "cloud", "spline", "ellipse", "elarc", "insert", "block", "point", "hatch", "gradient", "region", "table", "mtext", "addsel"];
const dimension = ["dlinear", "daligned", "darc", "dord", "|", "dradius", "djog", "ddiam", "dang", "|", "dquick", "dbase", "dcont", "dspace", "dbreak", "|", "dtol", "dcenter", "dinspect", "djogline", "|", "dedit", "dtedit", "dupdate", "|", "dstyle"];
const modify = ["erase", "copy", "mirror", "offset", "array", "move", "rotate", "scale", "stretch", "trim", "extend", "breakpt", "break", "join", "chamfer", "fillet", "explode"];
const order = ["front", "back", "above", "under", "|", "textfront", "hatchback"];
const menus = ["文件(F)", "编辑(E)", "视图(V)", "插入(I)", "格式(O)", "工具(T)", "绘图(D)", "标注(N)", "修改(M)", "参数(P)", "窗口(W)", "帮助(H)"];
const layouts = ["A1 840x594", "A2 594x420", "A3 420Ｘ297", "A3 630Ｘ297", "A3 840Ｘ297", "A4 210x297"];
const modes = [["infer"], ["snap"], ["grid"], ["ortho"], ["polar", 1], ["osnap", 1], ["osnap3"], ["otrack", 1], ["ducs", 1], ["dyn", 1], ["lwt"], ["tpy", 1], ["qp"], ["sc"]];

const ToolList = ({ items }) =>
  items.map((item, i) => {
    if (item === "|") return <Split key={i} />;
    if (item === "v" || item === "w") {
      return (
        <DropButton key={i} aria-label="more">
          <Caret color={item === "v" ? "#333" : "#999"} />
        </DropButton>
      );
    }
    return (
      <ToolButton key={i} aria-label={item}>
        <Icon name={item} />
      </ToolButton>
    );
  });

const Palette = ({ items }) => (
  <PaletteBox>
    <Grip />
    {items.map((item, i) =>
      item === "|" ? <Rule key={i} /> : (
        <PaletteButton key={i} aria-label={item}>
          <Icon name={item} />
        </PaletteButton>
      )
    )}
  </PaletteBox>
);

const Combo = ({ label, value, width, serif, mono, disabled, children }) => (
  <ComboBox $width={width} $disabled={disabled}>
    {children}
    <ComboSelect aria-label={label} defaultValue={value} disabled={disabled} $serif={serif} $mono={mono}>
      <option>{value}</option>
    </ComboSelect>
    <Caret color={disabled ? "#999" : "#000"} />
  </ComboBox>
);

const Label = ({ x, y, children, middle }) => (
  <text x={x} y={y} textAnchor={middle ? "middle" : "start"}>{children}</text>
);

const Badge = ({ x, letter, unit }) => (
  <>
    <circle cx={x} cy="382.500" r="18.500" fill="#fff" stroke="#000" />
    <g fill="#000">
      <Label x={x - 1} y={389} middle>{letter}</Label>
      <Label x={x - 1} y={419} middle>{unit}</Label>
    </g>
  </>
);

const Axes = ({ x }) => (
  <g fill="none" stroke="#ff7f7f">
    <path d={`M${x - 204} 382.500H${x + 204} M${x} 179V586`} strokeDasharray="26 2 5 2" />
    <path d={`M${x - 143.5} 238L${x + 144} 526.500 M${x + 144} 238L${x - 143.5} 526.500`} />
    <circle cx={x} cy="382.500" r="158" />
    <circle cx={x} cy="382.500" r="158" stroke="#f00" strokeDasharray="6 5 3 14" />
  </g>
);

const Diagram = () => (
  <Sheet>
    <g transform="translate(-31 -101)">
      <Axes x={532.5} />
      <Axes x={1290.5} />
      <g fill="none" stroke="#ff8000">
        <path d="M532.500 240.500C580 250 610 263 630.500 284.500C650 305 657.500 335 657.500 362C657.500 370 657 376 656 382.500C652 412 638 440 610.500 459.500C590 473 566 481 532.500 487.500" />
        <path d="M532.500 230.500C500 236 465 238 440 251.500C422 262 412 272 404 288C392 310 384 340 382.500 382.500C382 420 384 450 387 462C391 480 400 493 411.500 503.500C428 516 445 520 470 520.500C490 520 505 518 532.500 517" />
        <path d="M1288 236.500C1240 247 1213 260 1186 279C1158 301 1144 345 1144.500 382.500C1144.500 425 1160 460 1187 484C1212 504 1245 518 1288 526" />
      </g>
      <g fill="none" stroke="#000">
        <path d="M586 216.500H546.500L532.500 235 M532.500 224V241 M475 263.500H513L532.500 227" />
        <path d="M355 267.500H401L422 270.500L417 267.500" />
        <path d="M709 260.500H664.500L637.500 277.500 M630.500 284.500L644.500 270.500" />
        <path d="M443 359.500H404.500L376 382.500H383" />
        <path d="M753.500 413.500H707.500L674 382.500 M655.500 382.500H691" />
        <path d="M681 542.500H633.500L628 476.500 M610.500 459.500L644.500 494.500" />
        <path d="M603 566.500H544.500L532.500 505 M532.500 487V541 M490.500 502.500H523.500L532.500 528" />
        <path d="M342 495.500H387L416.500 498.500 M412 503.500L421.500 494" />
        <path d="M1223.500 263.500H1269L1288 231 M1253.500 305.500H1202.500L1186 279L1178.500 270" />
        <path d="M1200 359.500H1161.500L1138 382.500 M1132 382.500H1144.500" />
        <path d="M1239 466.500H1190.500L1182.500 489 M1178.500 494.500L1188 485 M1238 502.500H1280.500L1288 526" />
        <path d="M31 413.500H35" />
        <path d="M1023 299.500H1092 M1057.500 265V334 M1054.500 296.500H1060.500V302.500H1054.500Z" />
      </g>
      <Badge x={469.5} letter="M" unit="кН*м" />
      <Badge x={591.5} letter="N" unit="кН" />
      <Badge x={1226.5} letter="M" unit="кН*м" />
      <Label x={352} y={135}>Эпюры M и N в обделке от собственного веса</Label>
      <Label x={1144} y={135}>Эпюры M и N в обделке от собственного веса</Label>
      <Label x={546} y={210}>35.26</Label>
      <Label x={473} y={258}>0.27</Label>
      <Label x={355} y={265}>-1.09</Label>
      <Label x={669} y={260}>43.58</Label>
      <Label x={405} y={358}>1.44</Label>
      <Label x={709} y={409}>76.07</Label>
      <Label x={637} y={538}>105.5</Label>
      <Label x={546} y={565}>115.9</Label>
      <Label x={490} y={501}>4.3</Label>
      <Label x={341} y={492}>-3.1</Label>
      <Label x={32} y={409}>2</Label>
      <Label x={1224} y={261}>0.208</Label>
      <Label x={1206} y={302}>0.214</Label>
      <Label x={1164} y={358}>0.227</Label>
      <Label x={1192} y={463}>0.241</Label>
      <Label x={1235} y={501}>0.246</Label>
    </g>
  </Sheet>
);

const AppLogo = () => (
  <svg width="26" height="34" viewBox="0 0 26 34" aria-hidden="true">
    <path d="M10 26C14 20 20 22 25 27C18 27 10 29 4 32Z" fill="#4a4a4a" opacity="0.500" />
    <path d="M6 5L9 2H16L17 3L26 23L24 25L19 26L17 21H10L8 29L2 32L0 30Z" fill="#c2141a" />
    <path d="M9 2H16L26 23L19 25L12 7L5 28L0 30L6 5Z" fill="#e33a3e" />
    <path d="M10 17L12.500 8L16 17Z" fill="#6b0a0d" />
    <path d="M6 5L9 2H16L19 9C14 13 8 15 3 16Z" fill="#f59a9c" opacity="0.500" />
  </svg>
);

const WindowsFlag = () => (
  <svg width="36" height="34" viewBox="0 0 36 34" aria-hidden="true">
    <defs>
      <radialGradient id="orb" cx="50%" cy="95%" r="90%">
        <stop offset="0" stopColor="#6fe3fa" />
        <stop offset="0.450" stopColor="#23719f" />
        <stop offset="0.700" stopColor="#3d5f78" />
        <stop offset="1" stopColor="#b9cdd8" />
      </radialGradient>
    </defs>
    <circle cx="18" cy="17" r="16.500" fill="url(#orb)" stroke="#123e5e" />
    <path d="M10 10C12 8.500 15 8.500 17 9.500L15.500 16C13 15 11 15 8.500 16.500Z" fill="#ef5a24" />
    <path d="M18.500 10C21 11 24 11 27 9.500L25.500 16C22 17.500 20 17.500 17 16.500Z" fill="#8bc441" />
    <path d="M8 18C10.500 16.500 13 16.500 15 17.500L13.500 24C11 23 9 23 6.500 24.500Z" fill="#3fa9e8" />
    <path d="M16.500 18C19.500 19 22 19 25 17.500L23.500 24C20.500 25.500 18 25.500 15 24.500Z" fill="#fdd22f" />
  </svg>
);

const taskIcons = {
  browser: <><circle cx="8" cy="8" r="7.500" fill="#55b52c" /><path d="M4 8.500H12C12 3.500 4 3.500 4 8.500C4 13 10 13 12 10.500" fill="none" stroke="#fff" strokeWidth="2" /></>,
  steam: <><path d="M0 0H16V16H0Z" fill="#222" /><path d="M0 10L5 12L11 6" stroke="#fff" strokeWidth="3" fill="none" /><circle cx="5" cy="12" r="2.500" fill="#fff" /><circle cx="11" cy="5" r="3" stroke="#fff" strokeWidth="2" fill="#222" /></>,
  word: <><path d="M5 1H15V15H5Z" fill="#fff" stroke="#7e93b5" /><path d="M8 5H13 M8 8H13 M8 11H13" stroke="#7e93b5" /><path d="M0 3H10V12H0Z" fill="#2f5cab" /><path d="M2 5L3.500 10L5 6L6.500 10L8 5" stroke="#fff" fill="none" /></>,
  kugou: <><circle cx="8" cy="8" r="7" fill="#1b94e8" stroke="#fff" strokeWidth="1.500" /><path d="M6 4V12 M11 4L7 8L11 12" stroke="#fff" strokeWidth="2" fill="none" /></>,
  cad: <><path d="M2 3H15V15H1Z" fill="#ddd" /><path d="M1 10H15V15H1Z" fill="#222" /><path d="M2 9L6 0L10 9 M4 6H8" stroke="#e8131b" strokeWidth="2" fill="none" /></>,
};

const tasks = [
  ["browser", "Dota 2 Lounge - M..."],
  ["steam", "好友"],
  ["word", "Курсовая работа ..."],
  ["kugou", " - 缺口【我家有喜片..."],
  ["cad", "AutoCAD 2011 - [T...", true],
];

const App = () => (
  <Page>
    <GlobalStyle />
    <Header>
      <AppButton aria-label="application menu">
        <AppLogo />
        <Caret color="#333" />
      </AppButton>
      <HeaderRows>
        <TitleBar>
          <QuickAccess>
            <Workspace>
              <Icon name="gear" />
              <ComboSelect aria-label="workspace" defaultValue="AutoCAD 经典">
                <option>AutoCAD 经典</option>
              </ComboSelect>
              <Caret color="#333" />
            </Workspace>
            {["new", "open", "save", "saveas", "undo"].map((n) => (
              <QuickButton key={n} aria-label={n}><Icon name={n} /></QuickButton>
            ))}
            <DropButton aria-label="undo list"><Caret color="#555" /></DropButton>
            <RedoGroup>
              <QuickButton aria-label="redo"><Icon name="redo" /></QuickButton>
              <DropButton aria-label="redo list"><Caret color="#68798f" /></DropButton>
            </RedoGroup>
            <QuickButton aria-label="print"><Icon name="print" /></QuickButton>
            <DropButton aria-label="customize"><Caret /></DropButton>
          </QuickAccess>
          <Title>{"AutoCAD 2011     Туннель ЧжанЮй.dwg"}</Title>
          <SearchStrip>
            <DropButton aria-label="expand"><Arrow dir="right" color="#000" /></DropButton>
            <SearchInput aria-label="search" placeholder="鍵入关鍵字或短语" />
            <QuickButton aria-label="search"><Icon name="binoc" /></QuickButton>
            <DropButton aria-label="search options"><Caret color="#444" /></DropButton>
            <QuickButton aria-label="key"><Icon name="key" /></QuickButton>
            <QuickButton aria-label="exchange"><Icon name="dish" /></QuickButton>
            <QuickButton aria-label="favorites"><Icon name="star" /></QuickButton>
            <Thin />
            <QuickButton aria-label="help"><Icon name="helpball" /></QuickButton>
            <DropButton aria-label="help options"><Caret color="#444" /></DropButton>
          </SearchStrip>
          <WindowButtons>
            <WinButton aria-label="minimize" $width={29}>
              <svg width="12" height="6" viewBox="0 0 12 6"><path d="M1.500 1.500H10.500V4.500H1.500Z" fill="#fff" stroke="#345" /></svg>
            </WinButton>
            <WinButton aria-label="restore" $width={27}>
              <svg width="13" height="13" viewBox="0 0 13 13" fill="none"><path d="M4 2H11V9 M2 4H9V11H2Z" stroke="#345" strokeWidth="3" /><path d="M4 2H11V9H9 M2 4.500H9V11H2Z" stroke="#fff" strokeWidth="2" /></svg>
            </WinButton>
            <WinButton aria-label="close" $width={47}>
              <svg width="13" height="12" viewBox="0 0 13 12"><path d="M2.500 2L10.500 10 M10.500 2L2.500 10" stroke="#345" strokeWidth="4" /><path d="M2.500 2L10.500 10 M10.500 2L2.500 10" stroke="#fff" strokeWidth="3" /></svg>
            </WinButton>
          </WindowButtons>
        </TitleBar>
        <MenuBar>
          {menus.map((m) => <MenuItem key={m}>{m}</MenuItem>)}
          <Spacer />
          <DocButtons>
            <svg width="46" height="12" viewBox="0 0 46 12" fill="none" stroke="#222" aria-hidden="true">
              <path d="M2 9.500H11" strokeWidth="2" />
              <path d="M21.500 4V1.500H28.500V7.500H26 M18.500 4.500H25.500V10.500H18.500Z" />
              <path d="M36.500 2L43.500 10 M43.500 2L36.500 10" strokeWidth="2" />
            </svg>
          </DocButtons>
        </MenuBar>
      </HeaderRows>
    </Header>

    <Bars>
      <BarRow>
        <Bar><Grip $upright /><ToolList items={standard} /></Bar>
        <Bar>
          <Grip $upright />
          <ToolList items={["textstyle"]} />
          <Combo label="text style" value="Arial" width={120}><Icon name="annot" size={14} /></Combo>
          <Split />
          <ToolList items={["dimstyle"]} />
          <Combo label="dimension style" value="Dimension" width={120}><Icon name="annot" size={14} /></Combo>
          <Split />
          <ToolList items={["tablestyle"]} />
          <Combo label="table style" value="Standard" width={120} />
          <Split />
          <ToolList items={["leaderstyle"]} />
          <Combo label="leader style" value="Standard" width={120}><Icon name="annot" size={14} /></Combo>
        </Bar>
      </BarRow>
      <BarRow>
        <Bar>
          <Grip $upright />
          <Combo label="workspace" value="AutoCAD 经典" width={174}><Pad /></Combo>
          <ToolList items={["gear", "wsset"]} />
        </Bar>
        <Bar>
          <Grip $upright />
          <ToolList items={["layers"]} />
          <Combo label="layer" value="Constr-Thick" width={301}>
            <Icon name="bulb" size={16} /><Icon name="sun" size={16} /><Icon name="vpfreeze" size={16} /><Icon name="unlock" size={16} />
            <Swatch />
          </Combo>
          <ToolList items={["laycur", "layprev", "laystate"]} />
        </Bar>
        <Bar>
          <Grip $upright />
          <Combo label="color" value="ByLayer" width={148} serif><Swatch /></Combo>
          <Split />
          <Combo label="linetype" value="ByLayer" width={160} serif><Stroke $width={60} $weight={1} /></Combo>
          <Split />
          <Combo label="lineweight" value="ByLayer" width={124} serif><Stroke $width={35} $weight={3} /></Combo>
          <Split />
          <Combo label="plot style" value="BYCOLOR" width={120} mono disabled><Pad /></Combo>
        </Bar>
      </BarRow>
    </Bars>

    <Workarea>
      <Palette items={draw} />
      <DocWindow>
        <DocTop>
          <Canvas>
            <Diagram />
            <Compass>
              <svg width="108" height="108" viewBox="0 0 108 108" aria-hidden="true">
                <circle cx="54" cy="53" r="42" fill="none" stroke="#000" strokeOpacity="0.020" strokeWidth="7" />
                <path d="M35.500 34.500H72.500V71.500H35.500Z" fill="#f3f3f3" fillOpacity="0.900" stroke="#999" />
                <path d="M42 41H66V65H42Z" fill="#e4e6ec" />
                <g fill="#a8a8a8" textAnchor="middle" fontSize="14">
                  <text x="54" y="17">北</text>
                  <text x="12" y="60">西</text>
                  <text x="95" y="60">东</text>
                  <text x="54" y="102">南</text>
                </g>
                <text x="54" y="61" fontSize="22" fontWeight="300" textAnchor="middle" fill="#999">上</text>
              </svg>
              <WcsButton>
                WCS
                <svg width="9" height="6" viewBox="0 0 9 6" fill="#fff" stroke="#bbb" aria-hidden="true"><path d="M0.500 0.500H8.500L4.500 4.500Z" /></svg>
              </WcsButton>
            </Compass>
            <Ucs width="76" height="76" viewBox="0 0 76 76" fill="none" stroke="#000" aria-hidden="true">
              <path d="M6.500 17V67.500H57 M2.500 63.500H10.500V71.500H2.500Z" />
              <path d="M8 1L14 7.500L20 1 M14.500 7V13 M61 54L74 66 M74 54L61 66" />
            </Ucs>
          </Canvas>
          <VScroll>
            <ScrollButton aria-label="scroll up"><Arrow dir="up" /></ScrollButton>
            <Track $top={233}><Thumb /></Track>
            <ScrollButton aria-label="scroll down"><Arrow dir="down" /></ScrollButton>
          </VScroll>
        </DocTop>
        <TabRow>
          {["M2.500 0V8 M9 0V8L4 4Z", "M8 0V8L3 4Z", "M3 0V8L8 4Z", "M2 0V8L7 4Z M8.500 0V8"].map((d) => (
            <NavButton key={d} aria-label="sheet">
              <svg width="11" height="8" viewBox="0 0 11 8"><path d={d} fill="#666" stroke="#666" /></svg>
            </NavButton>
          ))}
          <Slash viewBox="0 0 7 16" $active><path d="M0 0L6 16" stroke="#555" fill="none" /></Slash>
          <Tab $active>模型</Tab>
          {layouts.map((t) => (
            <React.Fragment key={t}>
              <Slash viewBox="0 0 7 16"><path d="M0 16L6 0" stroke="#555" fill="none" strokeWidth="1.500" /></Slash>
              <Tab>{t}</Tab>
            </React.Fragment>
          ))}
          <Slash viewBox="0 0 7 16"><path d="M0 16L6 0" stroke="#555" fill="none" strokeWidth="1.500" /></Slash>
          <Spacer />
          <Splitter />
          <HScroll>
            <ScrollButton aria-label="scroll left"><Arrow dir="left" /></ScrollButton>
            <HTrack $left={21}><Thumb $flat /></HTrack>
            <ScrollButton aria-label="scroll right"><Arrow dir="right" /></ScrollButton>
          </HScroll>
          <Corner />
        </TabRow>
      </DocWindow>
      <Palette items={dimension} />
      <Stack>
        <Palette items={modify} />
        <Palette items={order} />
      </Stack>
    </Workarea>

    <Command>
      <CommandGrip><Grip $light /></CommandGrip>
      <CommandBody>
        <History>
          <Lines>
            <p><Han>命令</Han>:</p>
            <p><Han>命令</Han>: _mtedit</p>
          </Lines>
          <VScroll>
            <ScrollButton aria-label="history up"><Arrow dir="up" /></ScrollButton>
            <Track />
            <ScrollButton aria-label="history down"><Arrow dir="down" /></ScrollButton>
          </VScroll>
        </History>
        <Prompt>
          <label htmlFor="cmd"><Han>命令</Han>:</label>
          <input id="cmd" />
          <HScroll $short>
            <ScrollButton aria-label="command left"><Arrow dir="left" /></ScrollButton>
            <HTrack><Thumb $flat /></HTrack>
            <ScrollButton aria-label="command right"><Arrow dir="right" /></ScrollButton>
          </HScroll>
          <Corner />
        </Prompt>
      </CommandBody>
    </Command>

    <StatusBar>
      <Coords>28910.5306, -5163.8061, 0.0000</Coords>
      {modes.map(([name, on]) => (
        <StatusButton key={name} aria-label={name} $on={on}><Icon name={name} /></StatusButton>
      ))}
      <Spacer />
      <StatusButton $wide={31}>模型</StatusButton>
      <StatusButton aria-label="layout"><Icon name="layout" /></StatusButton>
      <StatusButton aria-label="quick view"><Icon name="quick" /></StatusButton>
      <StatusGap $width={18} />
      <StatusButton $wide={60}><Icon name="ascale" />1:20<Caret /></StatusButton>
      <StatusButton aria-label="visibility"><Icon name="avis" /></StatusButton>
      <StatusButton aria-label="auto scale"><Icon name="aauto" /></StatusButton>
      <StatusGap $width={6} />
      <StatusButton aria-label="workspace switch"><Icon name="gear" /></StatusButton>
      <StatusButton aria-label="lock"><Icon name="lock" /></StatusButton>
      <StatusButton aria-label="hardware"><Icon name="hw" /></StatusButton>
      <Tray><Icon name="trayfile" /><Icon name="traywarn" /><Icon name="bulb" size={16} /></Tray>
      <StatusGap $width={6} />
      <StatusButton aria-label="tray menu" $wide={12}><Caret /></StatusButton>
      <StatusButton aria-label="clean screen" $wide={23}><Icon name="screen" /></StatusButton>
    </StatusBar>

    <TaskBar>
      <StartButton aria-label="start"><WindowsFlag /></StartButton>
      {tasks.map(([icon, text, on]) => (
        <Task key={icon} $on={on}>
          <svg width="16" height="16" viewBox="0 0 16 16" aria-hidden="true">{taskIcons[icon]}</svg>
          <span>{text}</span>
        </Task>
      ))}
      <Spacer />
      <Lang>EN</Lang>
      <TrayIcons>
        <Arrow dir="up" color="#fff" />
        <svg width="16" height="16" viewBox="0 0 16 16" fill="none" stroke="#fff" strokeWidth="1.500" aria-hidden="true">
          <path d="M8 2H3V14H9V12 M3 4H7" />
          <path d="M8 5H14V8C14 10 8 10 8 8Z" fill="#fff" />
          <path d="M9.500 2V5 M12.500 2V5 M11 9V14" />
        </svg>
        <svg width="16" height="16" viewBox="0 0 16 16" fill="none" stroke="#fff" strokeWidth="1.500" aria-hidden="true">
          <path d="M6 5H14.500V12H5V8 M7 14.500H13 M1 2V5H5V2 M3 5V12H5" />
        </svg>
        <svg width="16" height="16" viewBox="0 0 16 16" fill="none" stroke="#fff" aria-hidden="true">
          <path d="M3 6H5L8 3V13L5 10H3Z" fill="#fff" />
          <path d="M11.500 5.500C13 7 13 9 11.500 10.500" />
        </svg>
      </TrayIcons>
      <Clock>5:32</Clock>
      <ShowDesktop aria-label="show desktop" />
    </TaskBar>
  </Page>
);

export default App;

const GlobalStyle = createGlobalStyle`
  * {
    box-sizing: border-box;
  }
  body {
    margin: 0;
    background: #666;
    font-family: "Noto Sans", "Noto Sans CJK SC", sans-serif;
    font-size: 12px;
  }
  button, select, input {
    font: inherit;
    color: inherit;
    margin: 0;
    padding: 0;
    border: 0;
    background: none;
  }
  svg {
    flex: none;
    display: block;
  }
`;

const centered = css`
  display: flex;
  align-items: center;
  justify-content: center;
`;
const Page = styled.div`
  display: flex;
  flex-direction: column;
  min-height: 100vh;
  overflow: hidden;
  background: #666;
`;
const Spacer = styled.div`
  flex: 1;
`;
const Header = styled.header`
  display: flex;
  height: 45px;
  background: #7a7a7a;
`;
const AppButton = styled.button`
  ${centered}
  gap: 2px;
  width: 41px;
  height: 41px;
  border: 1px solid #2c2c2c;
  background: linear-gradient(#b4b4b4, #707070);
`;
const HeaderRows = styled.div`
  flex: 1;
  min-width: 0;
`;
const TitleBar = styled.div`
  display: flex;
  height: 24px;
  background: linear-gradient(100deg, #1860b8 30%, #1866b5 48%, #17569c 60%, #1a5ca6 80%, #174f93);
  border-bottom: 1px solid #3a3a3a;
`;
const QuickAccess = styled.div`
  display: flex;
  align-items: center;
  padding-left: 5px;
  background: #8c8c8c;
`;
const Workspace = styled.div`
  display: flex;
  align-items: center;
  gap: 2px;
  width: 180px;
  height: 20px;
  padding: 0 2px;
  background: linear-gradient(90deg, #e6e6e6, #bdbdbd);
`;
const QuickButton = styled.button`
  ${centered}
  width: 24px;
  height: 22px;
`;
const DropButton = styled.button`
  ${centered}
  width: 13px;
  height: 22px;
`;
const RedoGroup = styled.div`
  display: flex;
  background: #8fa5c4;
`;
const Title = styled.h1`
  ${centered}
  flex: 1;
  margin: 0;
  color: #fff;
  font-size: 12px;
  font-weight: 500;
  white-space: pre;
  border-bottom: 1px solid #9fc4e8;
`;
const SearchStrip = styled.div`
  display: flex;
  align-items: center;
  background: #8a8a8a;
  border: 1px solid #666;
`;
const SearchInput = styled.input`
  width: 179px;
  height: 20px;
  padding: 0 3px;
  background: #f6f6f6;
  &::placeholder {
    color: #777;
    font-style: italic;
    font-size: 11px;
  }
`;
const Thin = styled.i`
  width: 1px;
  height: 18px;
  margin: 0 5px;
  background: #5f5f5f;
`;
const WindowButtons = styled.div`
  display: flex;
  height: 18px;
  margin: 0 3px 0 13px;
  border: 1px solid #9db8d8;
  border-top: 0;
  border-radius: 0 0 5px 5px;
`;
const WinButton = styled.button`
  ${centered}
  width: ${(p) => p.$width}px;
  background: linear-gradient(#6e93bd, #2f629f 55%, #2a5a96);
  & + & {
    border-left: 1px solid #9db8d8;
  }
`;
const MenuBar = styled.nav`
  display: flex;
  align-items: center;
  gap: 1px;
  height: 21px;
  padding-left: 3px;
  background: linear-gradient(#a2a2a2, #666);
`;
const MenuItem = styled.button`
  padding: 0 12px;
  color: #fff;
  line-height: 20px;
`;
const DocButtons = styled.div`
  padding-right: 3px;
`;
const Bars = styled.div`
  display: flex;
  flex-direction: column;
  gap: 3px;
`;
const BarRow = styled.div`
  display: flex;
  gap: 2px;
`;
const Bar = styled.div`
  display: flex;
  align-items: center;
  height: 24px;
  border: 1px solid #333;
  border-left: 0;
  background: #ececec;
`;
const Grip = styled.div`
  flex: none;
  align-self: stretch;
  width: ${(p) => (p.$upright ? "8px" : "auto")};
  height: ${(p) => (p.$upright ? "auto" : "8px")};
  padding: ${(p) => (p.$upright ? "4px 2px" : "2px 5px")};
  background-color: ${(p) => (p.$light ? "#9b9b9b" : "#5f5f5f")};
  &::before {
    content: "";
    display: block;
    height: 100%;
    background-image:
      linear-gradient(90deg, transparent 50%, ${(p) => (p.$light ? "#9b9b9b" : "#5f5f5f")} 50%),
      linear-gradient(#111 50%, transparent 50%);
    background-size: 2px 2px;
  }
`;
const ToolButton = styled.button`
  ${centered}
  width: 23px;
  height: 22px;
`;
const Split = styled.i`
  width: 1px;
  height: 18px;
  margin: 0 3px 0 2px;
  background: #000;
`;
const ComboBox = styled.div`
  display: flex;
  align-items: center;
  width: ${(p) => p.$width}px;
  height: 22px;
  padding: 0 3px;
  border: 1px solid #999;
  border-radius: 2px;
  color: ${(p) => (p.$disabled ? "#777" : "#000")};
  background: ${(p) => (p.$disabled ? "#f2f2f2" : "linear-gradient(#fdfdfd, #dadada)")};
`;
const ComboSelect = styled.select`
  flex: 1;
  min-width: 0;
  appearance: none;
  opacity: 1;
  font-family: ${(p) => (p.$serif ? '"Liberation Serif", serif' : p.$mono ? '"Liberation Mono", monospace' : "inherit")};
  font-size: ${(p) => (p.$mono ? 10 : 12)}px;
`;
const Pad = styled.i`
  width: 6px;
`;
const Swatch = styled.i`
  width: 10px;
  height: 10px;
  margin: 0 5px 0 2px;
  border: 1px solid #000;
  background: #ff8000;
`;
const Stroke = styled.i`
  width: ${(p) => p.$width}px;
  height: ${(p) => p.$weight}px;
  margin-right: 5px;
  background: #000;
`;
const Workarea = styled.main`
  display: flex;
  flex: 1;
  align-items: flex-start;
  gap: 3px;
  padding: 4px 3px 4px 0;
`;
const PaletteBox = styled.div`
  display: flex;
  flex-direction: column;
  width: 25px;
  border: 1px solid #333;
  background: #ececec;
`;
const PaletteButton = styled.button`
  ${centered}
  height: 22px;
`;
const Rule = styled.i`
  height: 1px;
  margin: 2px 2px 3px;
  background: #888;
`;
const Stack = styled.div`
  display: flex;
  flex-direction: column;
  gap: 1px;
`;
const DocWindow = styled.section`
  display: flex;
  flex-direction: column;
  flex: 1;
  align-self: stretch;
  min-width: 0;
  margin: 0 1px;
  border: 1px solid #f4f4f4;
  border-top-color: #999;
  border-left: 2px solid #999;
  border-right-width: 2px;
  background: #fff;
`;
const DocTop = styled.div`
  display: flex;
  flex: 1;
`;
const Canvas = styled.div`
  position: relative;
  display: flex;
  flex: 1;
  min-width: 0;
`;
const Sheet = styled.svg`
  flex: 1;
  min-width: 0;
  overflow: hidden;
  font-family: "Liberation Sans", sans-serif;
  font-size: 18px;
  shape-rendering: crispEdges;
`;
const Compass = styled.div`
  position: absolute;
  top: 9px;
  right: 8px;
  display: flex;
  flex-direction: column;
  align-items: center;
  gap: 10px;
`;
const WcsButton = styled.button`
  ${centered}
  gap: 6px;
  width: 48px;
  height: 16px;
  color: #999;
  font-size: 11px;
  border-radius: 3px;
  background: rgba(228, 231, 240, 0.7);
`;
const Ucs = styled.svg`
  position: absolute;
  left: 8px;
  bottom: 6px;
`;
const VScroll = styled.div`
  display: flex;
  flex-direction: column;
  width: 17px;
  background: #efefef;
  border-left: 1px solid #ddd;
`;
const HScroll = styled.div`
  display: flex;
  width: ${(p) => (p.$short ? "68px" : "33%")};
  background: #ebebeb;
`;
const ScrollButton = styled.button`
  ${centered}
  flex: none;
  min-width: 16px;
  height: 16px;
`;
const Track = styled.div`
  flex: 1;
  padding: ${(p) => p.$top || 0}px 1px 0;
`;
const HTrack = styled.div`
  flex: 1;
  padding: 1px 0 0 ${(p) => p.$left || 0}%;
`;
const Thumb = styled.div`
  width: 15px;
  height: ${(p) => (p.$flat ? 13 : 15)}px;
  margin: 0 3px 0 1px;
  margin-left: ${(p) => (p.$flat ? 1 : 0)}px;
  border: 1px solid #888;
  border-radius: 1px;
  background: linear-gradient(#f8f8f8, #c8c8c8);
`;
const TabRow = styled.div`
  display: flex;
  height: 16px;
  border-top: 1px solid #666;
  background: #efefef;
`;
const NavButton = styled.button`
  ${centered}
  width: 14px;
  border-right: 1px solid #999;
`;
const Slash = styled.svg`
  width: 7px;
  height: 16px;
  background: ${(p) => (p.$active ? "#fff" : "transparent")};
`;
const Tab = styled.button`
  padding: 0 5px 0 4px;
  height: 15px;
  font-family: "Liberation Serif", "Noto Sans CJK SC", serif;
  line-height: 14px;
  white-space: nowrap;
  background: ${(p) => (p.$active ? "#fff" : "transparent")};
  border-bottom: ${(p) => (p.$active ? "0" : "1px solid #777")};
`;
const Splitter = styled.i`
  width: 5px;
  margin: 1px;
  border: 1px solid #999;
  border-radius: 2px;
`;
const Corner = styled.i`
  width: 17px;
  background: #efefef;
`;
const Command = styled.section`
  display: flex;
  height: 58px;
  background: #fff;
`;
const CommandGrip = styled.div`
  width: 17px;
  padding: 1px 0;
  background: #9b9b9b;
`;
const CommandBody = styled.div`
  flex: 1;
  font-family: "Liberation Mono", "Noto Sans CJK SC", monospace;
  font-size: 13px;
`;
const History = styled.div`
  display: flex;
  height: 40px;
  border-bottom: 1px solid #999;
`;
const Lines = styled.div`
  flex: 1;
  padding: 1px 0 0 1px;
  p {
    height: 16px;
    margin: 0;
    line-height: 16px;
  }
`;
const Han = styled.span`
  font-size: 15px;
`;
const Prompt = styled.div`
  display: flex;
  height: 18px;
  line-height: 20px;
  padding-left: 1px;
  input {
    flex: 1;
    outline: 0;
  }
`;
const StatusBar = styled.footer`
  display: flex;
  height: 22px;
  border-top: 1px solid #000;
  background: linear-gradient(#9c9c9c, #7c7c7c);
`;
const Coords = styled.div`
  width: 229px;
  padding-left: 11px;
  font-family: "Liberation Mono", monospace;
  font-size: 10px;
  line-height: 24px;
`;
const StatusButton = styled.button`
  ${centered}
  gap: 2px;
  width: ${(p) => p.$wide || 22}px;
  border-left: 1px solid #6a6a6a;
  background: ${(p) => (p.$on ? "linear-gradient(#e2f4fb, #a5d3e4)" : "linear-gradient(#c6c6c6, #a4a4a4)")};
`;
const StatusGap = styled.i`
  width: ${(p) => p.$width}px;
`;
const Tray = styled.div`
  display: flex;
  align-items: center;
  gap: 3px;
  width: 65px;
  padding-left: 2px;
  margin: 1px 0 1px 2px;
  border: 1px solid #555;
  background: #aaa;
`;
const TaskBar = styled.footer`
  display: flex;
  align-items: center;
  gap: 4px;
  height: 30px;
  color: #fff;
  background:
    linear-gradient(31deg, transparent 43%, rgba(160, 200, 235, 0.5) 49%, transparent 55%) 900px 0 / 110px 30px no-repeat,
    linear-gradient(90deg, #1c5f8c, #24699b 30%, #175089 70%, #17407a 90%, #132f5c);
`;
const StartButton = styled.button`
  ${centered}
  align-items: flex-end;
  width: 56px;
  height: 34px;
  padding-right: 4px;
  align-self: flex-end;
`;
const Task = styled.button`
  display: flex;
  align-items: center;
  gap: 4px;
  width: 158px;
  height: 28px;
  padding: 0 9px;
  white-space: pre;
  border: 1px solid #a9cbdc;
  border-radius: 3px;
  outline: 1px solid #17405e;
  background: ${(p) => (p.$on ? "linear-gradient(165deg, #c3d3e2, #86a5c3 45%, #6f94b8)" : "linear-gradient(165deg, #6fa3be, #4683a8 45%, #347a9f)")};
`;
const Lang = styled.span`
  align-self: flex-start;
  margin: 5px 15px 0 0;
  font-family: "Liberation Serif", serif;
  font-size: 10px;
  font-weight: bold;
  line-height: 16px;
`;
const TrayIcons = styled.div`
  display: flex;
  align-items: center;
  gap: 9px;
`;
const Clock = styled.span`
  margin: 0 12px 0 19px;
`;
const ShowDesktop = styled.button`
  width: 14px;
  height: 30px;
  border: 1px solid #7e9cc0;
  background: linear-gradient(#3c6596, #18386a);
`;
